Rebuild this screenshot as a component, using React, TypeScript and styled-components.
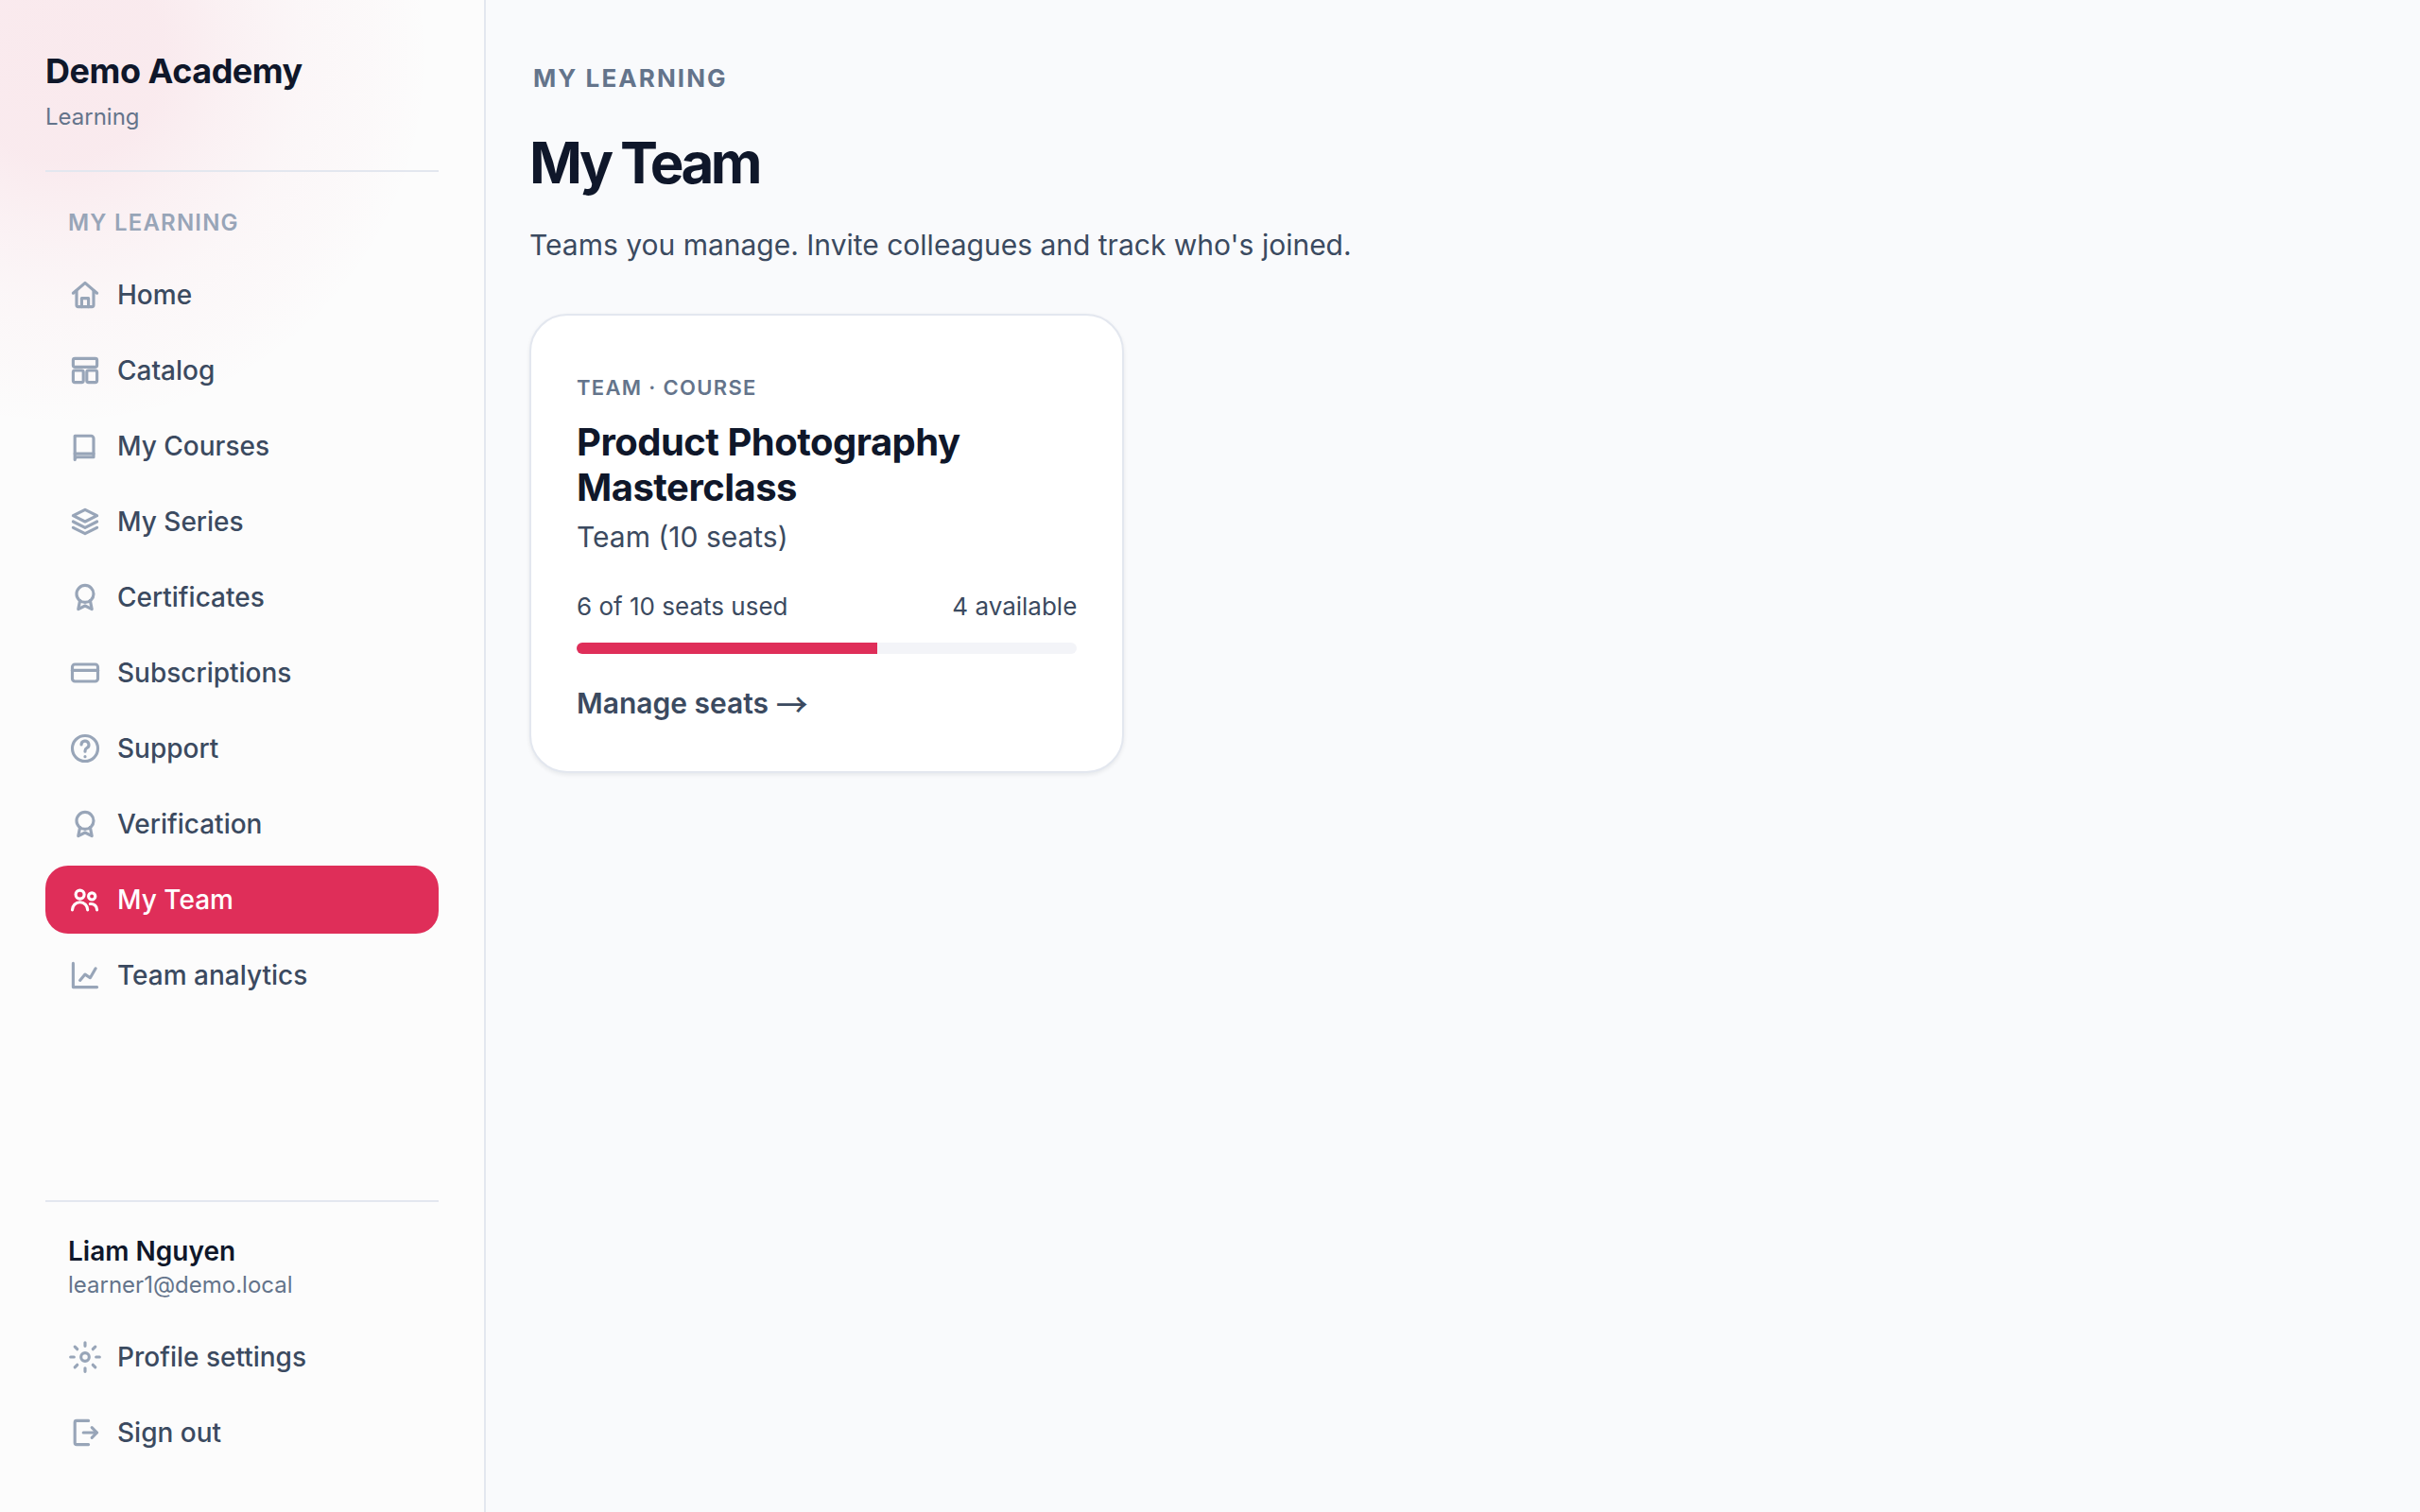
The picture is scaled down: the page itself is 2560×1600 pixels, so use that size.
import React from "react";
import styled, { createGlobalStyle, css } from "styled-components";

const color = {
  page: "#f9fafc",
  sidebar: "#fcfcfc",
  surface: "#ffffff",
  border: "#e3e7ef",
  track: "#f3f4f8",
  accent: "#df2e59",
  ink: "#0f172a",
  body: "#3b4a60",
  muted: "#64748b",
  faint: "#98a5b8",
};

const GlobalStyle = createGlobalStyle`
  *, *::before, *::after { box-sizing: border-box; }
  html, body { margin: 0; }
  body {
    background: ${color.page};
    color: ${color.body};
    font-family: Inter, "Liberation Sans", sans-serif;
    font-size: 30px;
    line-height: 48px;
    -webkit-font-smoothing: antialiased;
  }
  h1, h2, p { margin: 0; }
`;

const Shell = styled.div`
  display: grid;
  grid-template-columns: 512px minmax(0, 1fr);
  min-height: 100vh;
`;

const Sidebar = styled.aside`
  display: flex;
  flex-direction: column;
  padding: 48px;
  background:
    radial-gradient(
      circle 392px at 64px 60px,
      rgba(223, 46, 89, 0.09) 0,
      rgba(223, 46, 89, 0.085) 28%,
      rgba(223, 46, 89, 0.055) 46%,
      rgba(223, 46, 89, 0.028) 66%,
      rgba(223, 46, 89, 0.014) 84%,
      rgba(223, 46, 89, 0) 100%
    ),
    ${color.sidebar};
  box-shadow: 2px 0 0 ${color.border};
`;

const Brand = styled.header`
  padding-bottom: 40px;
  border-bottom: 2px solid ${color.border};
`;

const BrandName = styled.p`
  color: ${color.ink};
  font-size: 36px;
  font-weight: 700;
  line-height: 54px;
  letter-spacing: -0.013em;
`;

const SmallText = styled.p`
  color: ${color.muted};
  font-size: 24px;
  line-height: 32px;
`;

const BrandTagline = styled(SmallText)`
  margin-top: 6px;
`;

const NavHeading = styled.h2`
  margin: 38px 0 24px;
  padding: 0 24px;
  color: ${color.faint};
  font-size: 24px;
  font-weight: 600;
  line-height: 32px;
  letter-spacing: 0.05em;
  text-transform: uppercase;
`;

const NavList = styled.ul`
  display: flex;
  flex-direction: column;
  gap: 8px;
  margin: 0;
  padding: 0;
  list-style: none;
`;

const navItem = css<{ $active?: boolean }>`
  display: flex;
  align-items: center;
  gap: 16px;
  width: 100%;
  padding: 16px 24px;
  border: 0;
  border-radius: 24px;
  background: ${(p) => (p.$active ? color.accent : "transparent")};
  color: ${(p) => (p.$active ? "#ffffff" : color.body)};
  font: inherit;
  font-size: 28px;
  font-weight: 500;
  line-height: 40px;
  text-align: left;
  text-decoration: none;
  cursor: pointer;

  svg {
    color: ${(p) => (p.$active ? "#ffffff" : color.faint)};
  }
`;

const NavLink = styled.a<{ $active?: boolean }>`
  ${navItem}
`;

const NavButton = styled.button<{ $active?: boolean }>`
  ${navItem}
`;

const Account = styled.footer`
  margin-top: auto;
  padding-top: 32px;
  border-top: 2px solid ${color.border};
`;

const AccountIdentity = styled.div`
  margin-bottom: 24px;
  padding: 0 24px;
`;

const AccountName = styled.p`
  color: ${color.ink};
  font-size: 28px;
  font-weight: 600;
  line-height: 40px;
`;

const Main = styled.main`
  padding: 62px 48px 48px;
`;

const PageEyebrow = styled.p`
  margin-bottom: 32px;
  padding-left: 4px;
  color: ${color.muted};
  font-size: 26px;
  font-weight: 700;
  line-height: 42px;
  letter-spacing: 0.08em;
  text-transform: uppercase;
`;

const PageTitle = styled.h1`
  margin-bottom: 28px;
  color: ${color.ink};
  font-size: 60px;
  font-weight: 700;
  line-height: 72px;
  letter-spacing: -0.06em;
`;

const PageLead = styled.p`
  line-height: 46px;
`;

const TeamGrid = styled.section`
  display: grid;
  grid-template-columns: repeat(3, minmax(0, 1fr));
  gap: 32px;
  margin-top: 50px;
`;

const Card = styled.article`
  padding: 60px 48px 48px;
  border: 2px solid ${color.border};
  border-radius: 40px;
  background: ${color.surface};
  box-shadow: 0 2px 4px rgba(15, 23, 42, 0.08);
`;

const CardEyebrow = styled.p`
  margin-bottom: 18px;
  color: ${color.muted};
  font-size: 22px;
  font-weight: 600;
  line-height: 32px;
  letter-spacing: 0.06em;
  text-transform: uppercase;
`;

const CardTitle = styled.h2`
  margin-bottom: 4px;
  color: ${color.ink};
  font-size: 40px;
  font-weight: 700;
  line-height: 48px;
  letter-spacing: -0.013em;
`;

const SeatCounts = styled.div`
  display: flex;
  justify-content: space-between;
  margin: 28px 0 16px;
  font-size: 26px;
  line-height: 44px;
`;

const SeatTrack = styled.div`
  height: 12px;
  margin-bottom: 28px;
  overflow: hidden;
  border-radius: 6px;
  background: ${color.track};
`;

const SeatFill = styled.div`
  height: 100%;
  background: ${color.accent};
`;

const CardLink = styled.a`
  display: block;
  color: ${color.body};
  font-weight: 600;
  text-decoration: none;
`;

const Arrow = styled.span`
  font-family: "Noto Sans CJK JP", sans-serif;
  font-size: 34px;
  font-weight: 500;
  line-height: 1;
  vertical-align: -4px;
`;

const IconSvg = styled.svg`
  flex: none;
  width: 36px;
  height: 36px;
  fill: none;
  stroke: currentColor;
  stroke-width: 1.75;
  stroke-linecap: round;
  stroke-linejoin: round;
`;

const icons = {
  home: (
    <>
      <path d="M3 9l7-6 7 6" />
      <path d="M5 7.5V16a1 1 0 0 0 1 1h8a1 1 0 0 0 1-1V7.5" />
      <path d="M8 17v-5h4v5" />
    </>
  ),
  catalog: (
    <>
      <rect x="3" y="3" width="14" height="5" rx="1" />
      <rect x="3" y="10" width="6" height="7" rx="1" />
      <rect x="11" y="10" width="6" height="7" rx="1" />
    </>
  ),
  book: (
    <>
      <path d="M4 18V4h9.500a1.500 1.500 0 0 1 1.500 1.500V16.500H5.500A1.500 1.500 0 0 0 4 18z" />
      <path d="M4 14.500h11" />
    </>
  ),
  layers: (
    <>
      <path d="M10 3l7 3.500-7 3.500-7-3.500z" />
      <path d="M3 10l7 3.500 7-3.500" />
      <path d="M3 13.500l7 3.500 7-3.500" />
    </>
  ),
  award: (
    <>
      <circle cx="10" cy="8" r="5" />
      <path d="M7 12l-1 5 4-2 4 2-1-5" />
    </>
  ),
  card: (
    <>
      <rect x="2.500" y="5" width="15" height="10" rx="1.500" />
      <path d="M2.500 8.500h15" />
    </>
  ),
  help: (
    <>
      <circle cx="10" cy="10" r="7.500" />
      <path d="M7.800 7.800a2.200 2.200 0 1 1 3.300 1.900c-.7.400-1.100.9-1.100 1.800v.3" />
      <path d="M10 14.800v.01" />
    </>
  ),
  users: (
    <>
      <circle cx="7" cy="7" r="2.500" />
      <circle cx="14" cy="8" r="2" />
      <path d="M2.500 16c0-2.500 2-4.500 4.500-4.500s4.500 2 4.500 4.500" />
      <path d="M13 12.500c2.200-.2 4 1.200 4 3.500" />
    </>
  ),
  chart: (
    <>
      <path d="M3 3v14h14" />
      <path d="M7 13l3-3.500 3 2 3.200-5.500" />
    </>
  ),
  gear: (
    <>
      <circle cx="10" cy="10" r="2.400" />
      <path d="M10 1.500v2M10 16.500v2M1.500 10h2M16.500 10h2M4 4l1.400 1.400M14.600 14.600l1.400 1.400M4 16l1.400-1.400M14.600 5.400l1.400-1.400" />
    </>
  ),
  signOut: (
    <>
      <path d="M12 3H5a1 1 0 0 0-1 1v12a1 1 0 0 0 1 1h7" />
      <path d="M9 10h8M14 7l3 3-3 3" />
    </>
  ),
};

type IconName = keyof typeof icons;

function Icon({ name }: { name: IconName }) {
  return (
    <IconSvg viewBox="0 0 20 20" aria-hidden="true">
      {icons[name]}
    </IconSvg>
  );
}

const navigation: { label: string; icon: IconName; active?: boolean }[] = [
  { label: "Home", icon: "home" },
  { label: "Catalog", icon: "catalog" },
  { label: "My Courses", icon: "book" },
  { label: "My Series", icon: "layers" },
  { label: "Certificates", icon: "award" },
  { label: "Subscriptions", icon: "card" },
  { label: "Support", icon: "help" },
  { label: "Verification", icon: "award" },
  { label: "My Team", icon: "users", active: true },
  { label: "Team analytics", icon: "chart" },
];

const teams = [
  { kind: "Team · Course", title: "Product Photography Masterclass", plan: "Team (10 seats)", used: 6, seats: 10 },
];

export default function App() {
  return (
    <>
      <GlobalStyle />
      <Shell>
        <Sidebar>
          <Brand>
            <BrandName>Demo Academy</BrandName>
            <BrandTagline>Learning</BrandTagline>
          </Brand>
          <nav aria-labelledby="nav-heading">
            <NavHeading id="nav-heading">My Learning</NavHeading>
            <NavList>
              {navigation.map((item) => (
                <li key={item.label}>
                  <NavLink href="#" $active={item.active} aria-current={item.active ? "page" : undefined}>
                    <Icon name={item.icon} />
                    {item.label}
                  </NavLink>
                </li>
              ))}
            </NavList>
          </nav>
          <Account>
            <AccountIdentity>
              <AccountName>Liam Nguyen</AccountName>
              <SmallText>learner1@demo.local</SmallText>
            </AccountIdentity>
            <NavList>
              <li>
                <NavLink href="#">
                  <Icon name="gear" />
                  Profile settings
                </NavLink>
              </li>
              <li>
                <NavButton type="button">
                  <Icon name="signOut" />
                  Sign out
                </NavButton>
              </li>
            </NavList>
          </Account>
        </Sidebar>
        <Main>
          <PageEyebrow>My Learning</PageEyebrow>
          <PageTitle>My Team</PageTitle>
          <PageLead>Teams you manage. Invite colleagues and track who's joined.</PageLead>
          <TeamGrid>
            {teams.map((team) => (
              <Card key={team.title}>
                <CardEyebrow>{team.kind}</CardEyebrow>
                <CardTitle>{team.title}</CardTitle>
                <p>{team.plan}</p>
                <SeatCounts>
                  <span>
                    {team.used} of {team.seats} seats used
                  </span>
                  <span>{team.seats - team.used} available</span>
                </SeatCounts>
                <SeatTrack
                  role="progressbar"
                  aria-label="Seats used"
                  aria-valuemin={0}
                  aria-valuemax={team.seats}
                  aria-valuenow={team.used}
                >
                  <SeatFill style={{ width: `${(team.used / team.seats) * 100}%` }} />
                </SeatTrack>
                <CardLink href="#">
                  Manage seats <Arrow>→</Arrow>
                </CardLink>
              </Card>
            ))}
          </TeamGrid>
        </Main>
      </Shell>
    </>
  );
}
